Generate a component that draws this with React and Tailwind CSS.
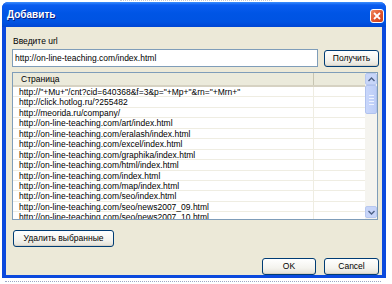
import React, { useState } from 'react';

const URLS = [
  'http://"+Mu+"/cnt?cid=640368&f=3&p="+Mp+"&rn="+Mrn+"',
  'http://click.hotlog.ru/?255482',
  'http://meorida.ru/company/',
  'http://on-line-teaching.com/art/index.html',
  'http://on-line-teaching.com/eralash/index.html',
  'http://on-line-teaching.com/excel/index.html',
  'http://on-line-teaching.com/graphika/index.html',
  'http://on-line-teaching.com/html/index.html',
  'http://on-line-teaching.com/index.html',
  'http://on-line-teaching.com/map/index.html',
  'http://on-line-teaching.com/seo/index.html',
  'http://on-line-teaching.com/seo/news2007_09.html',
  'http://on-line-teaching.com/seo/news2007_10.html',
];

// XP-style push button
const XpButton = ({ children, className = '' }) => (
  <button
    className={
      'h-[17px] rounded-[3px] border border-[#003c74] bg-[linear-gradient(to_bottom,#ffffff,#f4f3ee_60%,#e3e0d6)] text-[8.5px] leading-none text-black shadow-[inset_0_-1px_0_#d6d0c5] ' +
      className
    }
  >
    {children}
  </button>
);

const Arrow = ({ up }) => (
  <svg width="7" height="5" viewBox="0 0 7 5">
    <path
      d={up ? 'M0.5 4 L3.5 1 L6.5 4' : 'M0.5 1 L3.5 4 L6.5 1'}
      stroke="#4d6185"
      strokeWidth="1.4"
      fill="none"
    />
  </svg>
);

export default function App() {
  const [url, setUrl] = useState('http://on-line-teaching.com/index.html');

  return (
    <div className="w-[392px] h-[284px] bg-white overflow-hidden font-['Liberation_Sans',Arial,sans-serif]">
      <div className="h-[1px] mx-[120px] border-t border-dotted border-[#c8ccd4]" />
      {/* window */}
      <div className="ml-[2px] mt-[1px] w-[384px] h-[276px] flex flex-col rounded-t-[6px] overflow-hidden bg-[#0b49dd]">
        {/* title bar */}
        <div className="h-[26px] flex items-center justify-between pl-[5px] pr-[2px] bg-[linear-gradient(to_bottom,#3d8ffd,#0a5cf0_12%,#0055e5_45%,#0053e2_80%,#0046d4)]">
          <span className="text-[10px] font-bold text-white [text-shadow:1px_1px_0_#0a1e80]">Добавить</span>
          <div className="w-[14px] h-[14px] mt-[2px] rounded-[3px] border border-white bg-[linear-gradient(135deg,#f08a60,#e0532b_55%,#c8401c)] flex items-center justify-center">
            <svg width="8" height="8" viewBox="0 0 8 8">
              <path d="M1 1 L7 7 M7 1 L1 7" stroke="white" strokeWidth="1.8" />
            </svg>
          </div>
        </div>
        {/* body */}
        <div className="flex-1 mx-[4px] mb-[3px] bg-[#ece9d8] flex flex-col pl-[6px] pr-[3px]">
          <div className="mt-[9px] pl-[1px] text-[8.5px] leading-[10px] text-black">Введите url</div>
          <div className="mt-[3px] flex items-center">
            <input
              className="w-[306px] h-[18px] border border-[#7f9db9] bg-white pl-[2px] text-[8.5px] text-black outline-none font-['Liberation_Sans',Arial,sans-serif]"
              value={url}
              onChange={e => setUrl(e.target.value)}
            />
            <XpButton className="ml-[6px] w-[55px]">Получить</XpButton>
          </div>
          {/* list */}
          <div className="mt-[5px] w-[366px] h-[148px] border border-[#7f9db9] bg-white flex overflow-hidden">
            <div className="flex-1 flex flex-col overflow-hidden">
              <div className="h-[14px] shrink-0 flex bg-[#ebeadb] border-b-2 border-[#d6d2c2]">
                <div className="w-[301px] pl-[8px] text-[8.5px] leading-[12px] text-black border-r border-[#c7c5b2]">Страница</div>
                <div className="flex-1" />
              </div>
              {URLS.map(u => (
                <div key={u} className="h-[10.45px] shrink-0 flex border-b border-[#efede2]">
                  <div className="w-[301px] pl-[6px] text-[8.5px] leading-[10px] text-black whitespace-nowrap border-r border-[#efede2]">{u}</div>
                  <div className="flex-1" />
                </div>
              ))}
            </div>
            {/* scrollbar */}
            <div className="w-[12px] shrink-0 bg-[#f5f4ef] flex flex-col">
              <div className="h-[12px] rounded-[2px] border border-[#b8c8ef] bg-[#c7d5f9] flex items-center justify-center">
                <Arrow up />
              </div>
              <div className="h-[29px] rounded-[2px] border border-[#b0c2ee] bg-[linear-gradient(to_right,#c9d7fb,#bccdf7)] flex flex-col items-center justify-center gap-[2px]">
                <div className="w-[5px] h-[1px] bg-[#eef3ff]" />
                <div className="w-[5px] h-[1px] bg-[#eef3ff]" />
                <div className="w-[5px] h-[1px] bg-[#eef3ff]" />
                <div className="w-[5px] h-[1px] bg-[#eef3ff]" />
              </div>
              <div className="flex-1" />
              <div className="h-[12px] mb-[1px] rounded-[2px] border border-[#b8c8ef] bg-[#c7d5f9] flex items-center justify-center">
                <Arrow />
              </div>
            </div>
          </div>
          <div className="mt-[4px] pl-[1px]">
            <XpButton className="w-[101px]">Удалить выбранные</XpButton>
          </div>
          <div className="mt-[10px] flex justify-end gap-[8px]">
            <XpButton className="w-[54px]">OK</XpButton>
            <XpButton className="w-[55px]">Cancel</XpButton>
          </div>
        </div>
      </div>
      <div className="mt-[3px] ml-[5px] w-[376px] border-t border-dotted border-[#9aa6c4]" />
    </div>
  );
}
